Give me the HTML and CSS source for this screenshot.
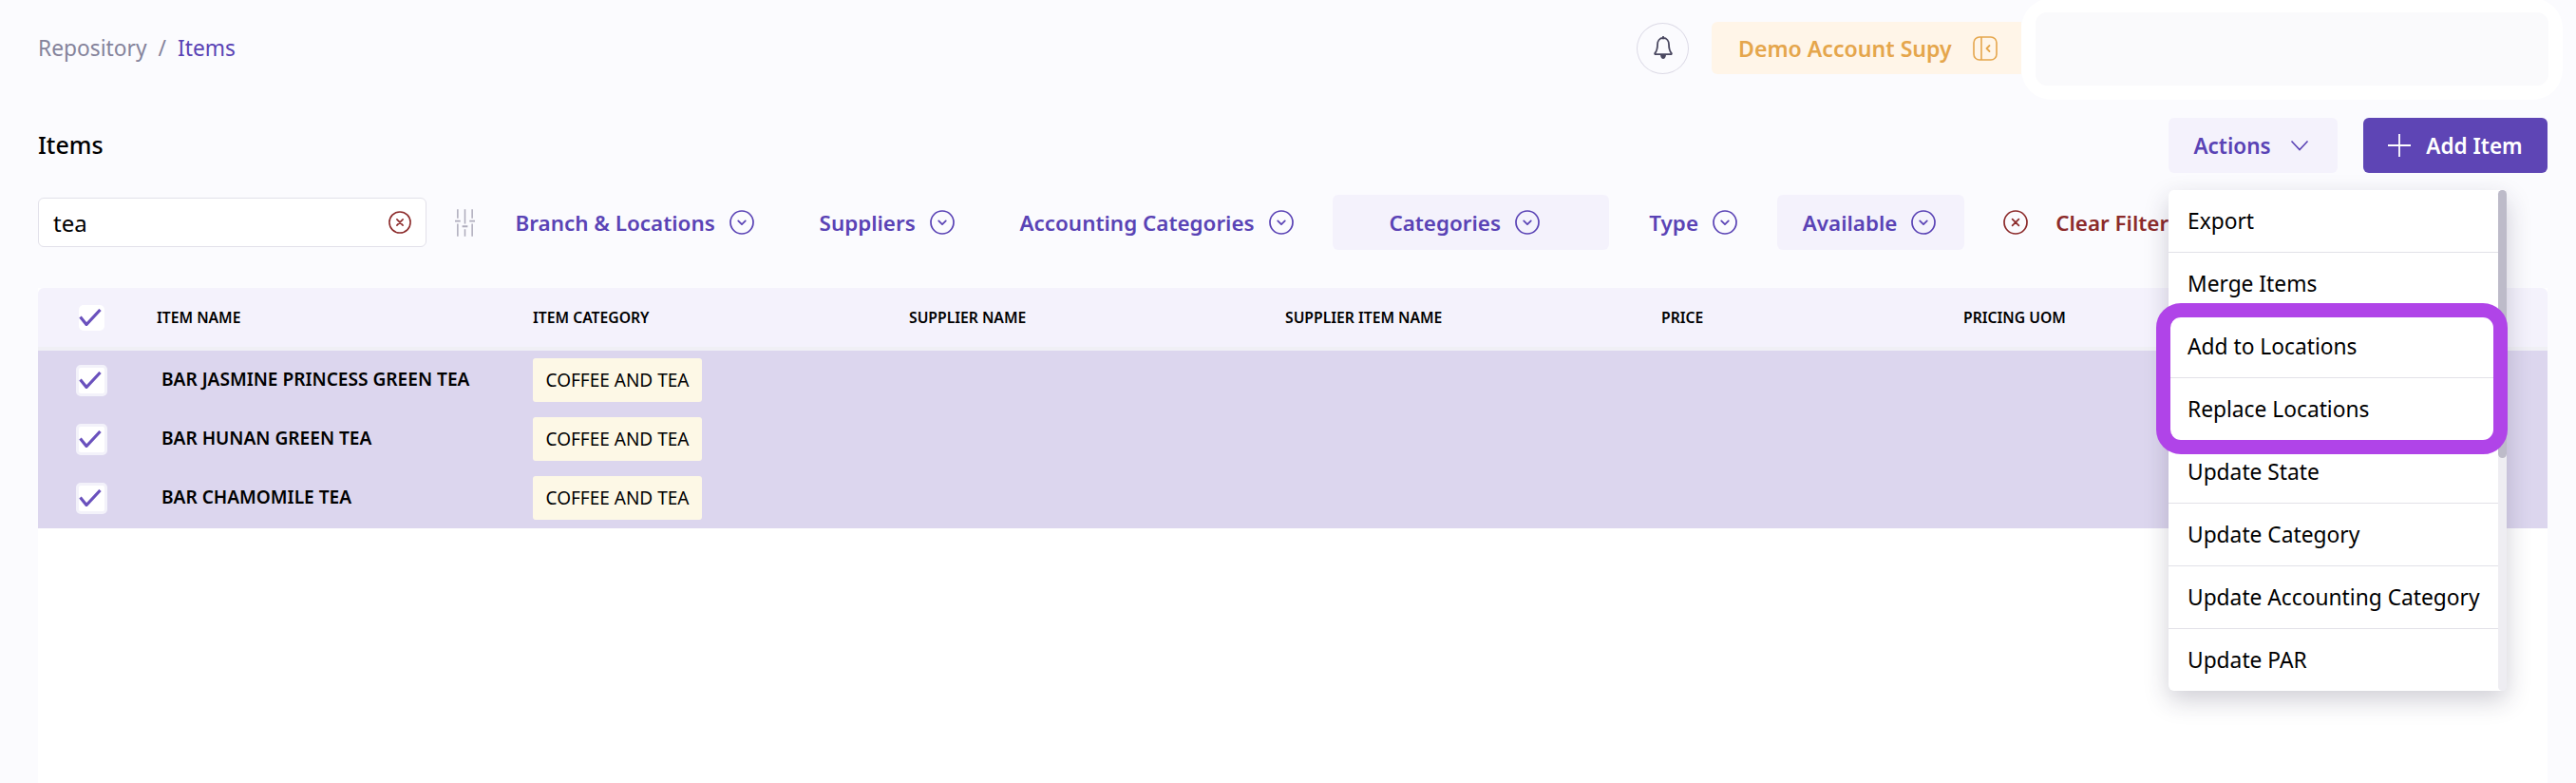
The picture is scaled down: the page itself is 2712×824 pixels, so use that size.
FILE: index.html
```html
<!DOCTYPE html>
<html lang="en">
<head>
<meta charset="utf-8">
<title>Items</title>
<link rel="stylesheet" href="styles.css">
</head>
<body>
<svg class="sprite" aria-hidden="true">
  <symbol id="chev-circle" viewBox="0 0 26 26"><circle cx="13" cy="13" r="12" fill="none" stroke="currentColor" stroke-width="1.7"/><path d="M9.2 11.4 13 15.2l3.8-3.8" fill="none" stroke="currentColor" stroke-width="1.7" stroke-linecap="round" stroke-linejoin="round"/></symbol>
  <symbol id="x-circle" viewBox="0 0 26 26"><circle cx="13" cy="13" r="12" fill="none" stroke="currentColor" stroke-width="1.7"/><path d="m9.6 9.6 6.8 6.8m0-6.8-6.8 6.8" fill="none" stroke="currentColor" stroke-width="1.7" stroke-linecap="round"/></symbol>
  <symbol id="check" viewBox="0 0 24 18"><path d="M1.5 8.5 8 16.5 22.5 1" fill="none" stroke="currentColor" stroke-width="3.2"/></symbol>
</svg>
<div class="page">
  <header class="topbar">
    <nav class="crumbs"><span class="crumb-root">Repository</span><span class="crumb-sep">/</span><span class="crumb-cur">Items</span></nav>
    <button class="bell"><svg viewBox="0 0 20 26" class="bell-icon"><path d="M10 2c-3.800 0-6 3-6 6.800 0 5.200-1 7.200-2.600 9-.5.6-.1 1.400.7 1.400h15.800c.8 0 1.200-.8.7-1.400-1.600-1.800-2.600-3.800-2.600-9C16 5 13.800 2 10 2Z" fill="none" stroke="currentColor" stroke-width="1.8" stroke-linejoin="round"/><path d="M10 .5v2" stroke="currentColor" stroke-width="1.8" stroke-linecap="round"/><path d="M7 20c.4 2.400 1.500 4 3 4s2.600-1.600 3-4Z" fill="currentColor"/></svg></button>
    <div class="account"><span>Demo Account Supy</span><svg viewBox="0 0 26 26" class="panel-icon"><rect x="1" y="1" width="24" height="24" rx="6" fill="none" stroke="currentColor" stroke-width="1.6"/><path d="M9 1v24" stroke="currentColor" stroke-width="1.6"/><path d="m17.5 10-3 3 3 3" fill="none" stroke="currentColor" stroke-width="1.8" stroke-linecap="round" stroke-linejoin="round"/></svg></div>
    <div class="blob"><div class="blob-inner"></div></div>
  </header>

  <div class="title-row">
    <h1 class="title">Items</h1>
    <div class="actions-wrap">
      <button class="btn-actions">Actions<svg viewBox="0 0 20 12" class="chev"><path d="m1.5 1.5 8.500 9 8.500-9" fill="none" stroke="currentColor" stroke-width="1.6"/></svg></button>
      <div class="menu">
        <ul class="menu-list">
          <li class="menu-item">Export</li>
          <li class="menu-item">Merge Items</li>
          <li class="menu-item">Add to Locations</li>
          <li class="menu-item">Replace Locations</li>
          <li class="menu-item">Update State</li>
          <li class="menu-item">Update Category</li>
          <li class="menu-item">Update Accounting Category</li>
          <li class="menu-item">Update PAR</li>
        </ul>
        <div class="scroll"><div class="scroll-thumb"></div></div>
        <div class="highlight"></div>
      </div>
    </div>
    <button class="btn-add"><svg viewBox="0 0 24 24" class="plus"><path d="M12 0v24M0 12h24" stroke="currentColor" stroke-width="1.8"/></svg>Add Item</button>
  </div>

  <div class="filters">
    <div class="search"><span class="search-text">tea</span><svg class="search-x"><use href="#x-circle"/></svg></div>
    <svg viewBox="0 0 22 32" class="sliders"><path d="M3 1v10M3 17v14M11 1v16M11 23v8M19 1v10M19 17v14" stroke="currentColor" stroke-width="1.6"/><path d="M0 14h6M8 20h6M16 14h6" stroke="currentColor" stroke-width="2"/></svg>
    <div class="filter">Branch &amp; Locations<svg class="ci"><use href="#chev-circle"/></svg></div>
    <div class="filter">Suppliers<svg class="ci"><use href="#chev-circle"/></svg></div>
    <div class="filter">Accounting Categories<svg class="ci"><use href="#chev-circle"/></svg></div>
    <div class="filter filter-on filter-wide">Categories<svg class="ci"><use href="#chev-circle"/></svg></div>
    <div class="filter">Type<svg class="ci"><use href="#chev-circle"/></svg></div>
    <div class="filter filter-on">Available<svg class="ci"><use href="#chev-circle"/></svg></div>
    <div class="clear"><svg class="ci"><use href="#x-circle"/></svg>Clear Filters</div>
  </div>

  <section class="table">
    <div class="thead">
      <div class="cell-check"><span class="hbox"><svg class="tick"><use href="#check"/></svg></span></div>
      <div class="th">ITEM NAME</div>
      <div class="th">ITEM CATEGORY</div>
      <div class="th">SUPPLIER NAME</div>
      <div class="th">SUPPLIER ITEM NAME</div>
      <div class="th">PRICE</div>
      <div class="th">PRICING UOM</div>
    </div>
    <div class="tbody">
      <div class="tr">
        <div class="cell-check"><span class="box"><svg class="tick"><use href="#check"/></svg></span></div>
        <div class="td-name">BAR JASMINE PRINCESS GREEN TEA</div>
        <div class="td-cat"><span class="tag">COFFEE AND TEA</span></div>
      </div>
      <div class="tr">
        <div class="cell-check"><span class="box"><svg class="tick"><use href="#check"/></svg></span></div>
        <div class="td-name">BAR HUNAN GREEN TEA</div>
        <div class="td-cat"><span class="tag">COFFEE AND TEA</span></div>
      </div>
      <div class="tr">
        <div class="cell-check"><span class="box"><svg class="tick"><use href="#check"/></svg></span></div>
        <div class="td-name">BAR CHAMOMILE TEA</div>
        <div class="td-cat"><span class="tag">COFFEE AND TEA</span></div>
      </div>
    </div>
  </section>
</div>
</body>
</html>
```

FILE: styles.css
```css
* { box-sizing: border-box; }
html, body { margin: 0; height: 100%; }
body {
  background: #fbfbfe;
  font-family: "Noto Sans", sans-serif;
  color: #000;
  overflow: hidden;
}
button { font-family: inherit; border: 0; padding: 0; cursor: pointer; }
.sprite { position: absolute; width: 0; height: 0; }
.page { display: flex; flex-direction: column; height: 824px; padding: 0 30px 0 40px; }

.topbar { display: flex; align-items: center; height: 105px; padding-bottom: 4px; flex: none; }
.crumbs { display: flex; align-items: center; font-size: 22.75px; margin: 0 auto 0 0; }
.crumb-root { color: #85839b; }
.crumb-sep { color: #85839b; margin: 0 12px; }
.crumb-cur { color: #5a43b5; }
.bell {
  width: 55px; height: 54px; border-radius: 50%;
  border: 1.5px solid #dcdae6; background: #fbfbfe; color: #4a4860;
  display: flex; align-items: center; justify-content: center;
  margin-right: 24px;
}
.bell-icon { width: 20px; height: 26px; }
.account {
  display: flex; align-items: center; gap: 22px;
  width: 326px; height: 55px; padding-left: 28px;
  background: #fff5e8; border-radius: 6px 0 0 6px;
  color: #e5a64c; font-size: 23.1px; font-weight: 600;
}
.panel-icon { width: 26px; height: 26px; flex: none; }
.blob {
  align-self: flex-start; flex: none;
  width: 570px; height: 107px; margin: -2px -16px 0 0;
  padding: 15px; background: #fff; border-radius: 32px;
}
.blob-inner { height: 77px; background: #fafafc; border-radius: 12px; }

.title-row { display: flex; align-items: center; height: 58px; margin-top: 19px; flex: none; position: relative; z-index: 5; }
.title { margin: 0 auto 2px 0; font-size: 25px; font-weight: 500; }
.actions-wrap { position: relative; margin-right: 27px; }
.btn-actions {
  display: flex; align-items: center; justify-content: center; gap: 20px;
  width: 178px; height: 58px; padding-right: 4px; border-radius: 6px;
  background: #f4f2fc; color: #5a43b5; font-size: 22.5px; font-weight: 600;
}
.chev { width: 20px; height: 12px; }
.btn-add {
  display: flex; align-items: center; justify-content: center; gap: 16px;
  width: 194px; height: 58px; border-radius: 6px;
  background: #5e45b5; color: #fff; font-size: 22.5px; font-weight: 600;
}
.plus { width: 24px; height: 24px; }

.menu {
  position: absolute; top: 76px; left: 0; width: 356px; height: 527px;
  background: #fff; border-radius: 6px;
  box-shadow: 0 10px 26px rgba(40, 36, 70, .22);
}
.menu-list { list-style: none; margin: 0; padding: 0; height: 100%; overflow: hidden; width: 347px; }
.menu-item {
  display: flex; align-items: center; height: 66px; padding: 0 0 1px 20px;
  font-size: 22.75px; border-bottom: 1.5px solid #e2e1e8; white-space: nowrap;
}
.menu-item:last-child { border-bottom: 0; }
.scroll { position: absolute; top: 0; right: 0; bottom: 0; width: 9px; background: #eeedf2; border-radius: 5px; }
.scroll-thumb { height: 282px; background: #bdbbc9; border-radius: 5px; }
.highlight {
  position: absolute; left: -13px; top: 119px; width: 370px; height: 159px;
  border: 15px solid #b044e8; border-radius: 26px;
}

.filters { display: flex; align-items: center; gap: 15.8px; height: 58px; margin-top: 23px; flex: none; }
.search {
  display: flex; align-items: center; justify-content: space-between;
  width: 409px; height: 52px; padding: 0 15px;
  background: #fff; border: 1.5px solid #e2e1ea; border-radius: 6px;
  font-size: 24px;
}
.search-x { width: 24px; height: 24px; color: #8c2b2b; }
.sliders { width: 21px; height: 31px; margin-left: 14px; color: #aeacbc; flex: none; }
.filter {
  display: flex; align-items: center; gap: 15px;
  height: 58px; padding: 0 26px 0 27px; border-radius: 6px;
  color: #5a43b5; font-size: 22.4px; font-weight: 600; white-space: nowrap;
}
.filter-on { background: #f4f2fc; padding-right: 30px; }
.filter-wide { padding: 0 72.5px 0 59px; }
.ci { width: 26px; height: 26px; flex: none; }
.clear {
  display: flex; align-items: center; gap: 29px; margin-left: 25px;
  color: #8c2b2b; font-size: 22.4px; font-weight: 600; white-space: nowrap;
}

.table { margin-top: 40px; flex: 1; background: #fff; }
.thead {
  display: grid; grid-template-columns: 125px 396px 396px 396px 396px 318px 318px;
  align-items: center; height: 66px; background: #f4f2fc;
  border-radius: 6px 6px 0 0; border-bottom: 4px solid #f0f0f5;
}
.th { font-size: 15.7px; font-weight: 600; white-space: nowrap; padding-bottom: 1px; }
.cell-check { display: flex; padding-left: 40px; }
.hbox, .box { display: flex; align-items: center; background: #fff; border-radius: 5px; }
.hbox { width: 27px; height: 27px; margin-left: 3px; }
.box { width: 33px; height: 33px; border: 3px solid #f3f2fa; }
.tick { width: 24px; height: 18px; color: #6a51bd; flex: none; }
.tbody { height: 187px; background: #dcd6ee; }
.tr { display: grid; grid-template-columns: 125px 396px 1fr; align-items: center; height: 62px; }
.td-name { font-size: 19.1px; font-weight: 600; padding-left: 5px; padding-bottom: 3px; white-space: nowrap; }
.td-cat { display: flex; }
.tag {
  display: flex; align-items: center; height: 46px; padding: 0 13.5px;
  background: #fdf8e6; border-radius: 3px; font-size: 19px;
}
```
